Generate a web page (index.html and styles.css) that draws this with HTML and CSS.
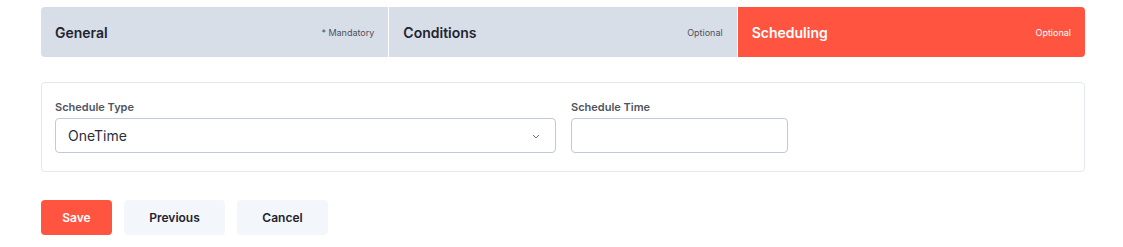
FILE: index.html
```html
<!DOCTYPE html>
<html>
<head>
<meta charset="utf-8">
<link rel="stylesheet" href="styles.css">
</head>
<body>
<div class="page">
  <div class="tabs">
    <div class="tab">
      <span class="tab-title">General</span>
      <span class="tab-note">* Mandatory</span>
    </div>
    <div class="tab">
      <span class="tab-title">Conditions</span>
      <span class="tab-note">Optional</span>
    </div>
    <div class="tab active">
      <span class="tab-title">Scheduling</span>
      <span class="tab-note">Optional</span>
    </div>
  </div>

  <div class="card">
    <div class="field field-type">
      <label class="label">Schedule Type</label>
      <div class="select">
        <span>OneTime</span>
        <svg class="chev" width="8" height="5" viewBox="0 0 8 5"><path d="M1 1 L4 4 L7 1" fill="none" stroke="#6b7280" stroke-width="1"/></svg>
      </div>
    </div>
    <div class="field field-time">
      <label class="label">Schedule Time</label>
      <div class="input"></div>
    </div>
  </div>

  <div class="actions">
    <button class="btn btn-primary">Save</button>
    <button class="btn btn-light btn-prev">Previous</button>
    <button class="btn btn-light btn-cancel">Cancel</button>
  </div>
</div>
</body>
</html>
```

FILE: styles.css
```css
* { box-sizing: border-box; }
body {
  margin: 0;
  background: #ffffff;
  font-family: Inter, "Liberation Sans", sans-serif;
  color: #1f2430;
}
.page {
  padding: 7px 38px 0 41px;
  width: 1123px;
}
.tabs {
  display: flex;
  width: 1044px;
  height: 50px;
  gap: 1px;
  border-radius: 4px;
  overflow: hidden;
}
.tab {
  flex: 1;
  display: flex;
  align-items: center;
  justify-content: space-between;
  padding: 0 14px;
  background: #d8dee8;
}
.tab.active {
  background: #ff5540;
  color: #ffffff;
}
.tab-title {
  font-size: 14px;
  font-weight: 600;
  color: #1f2430;
}
.tab-note {
  font-size: 9px;
  color: #4b5260;
}
.tab.active .tab-title,
.tab.active .tab-note {
  color: #ffffff;
}
.card {
  margin-top: 25px;
  width: 1044px;
  height: 90px;
  border: 1px solid #e3e7ee;
  border-radius: 4px;
  padding: 17px 13px 0 13px;
  display: flex;
  gap: 15px;
}
.field {
  display: flex;
  flex-direction: column;
}
.label {
  font-size: 11px;
  font-weight: 600;
  color: #50555f;
  line-height: 14px;
  height: 18px;
}
.field-type { width: 501px; }
.field-time { width: 217px; }
.select, .input {
  height: 35px;
  border: 1px solid #c2cad5;
  border-radius: 4px;
  background: #ffffff;
}
.select {
  display: flex;
  align-items: center;
  justify-content: space-between;
  padding: 0 15px 0 12px;
  font-size: 14px;
  color: #2a2f38;
}
.chev { margin-top: 1px; }
.actions {
  margin-top: 28px;
  display: flex;
  gap: 12px;
}
.btn {
  height: 35px;
  border: none;
  border-radius: 4px;
  font-family: Inter, "Liberation Sans", sans-serif;
  font-size: 12px;
  font-weight: 600;
  padding: 0;
}
.btn-primary {
  width: 71px;
  background: #ff5540;
  color: #ffffff;
}
.btn-light {
  background: #f3f6fb;
  color: #1f2430;
}
.btn-prev { width: 101px; }
.btn-cancel { width: 91px; }
```
